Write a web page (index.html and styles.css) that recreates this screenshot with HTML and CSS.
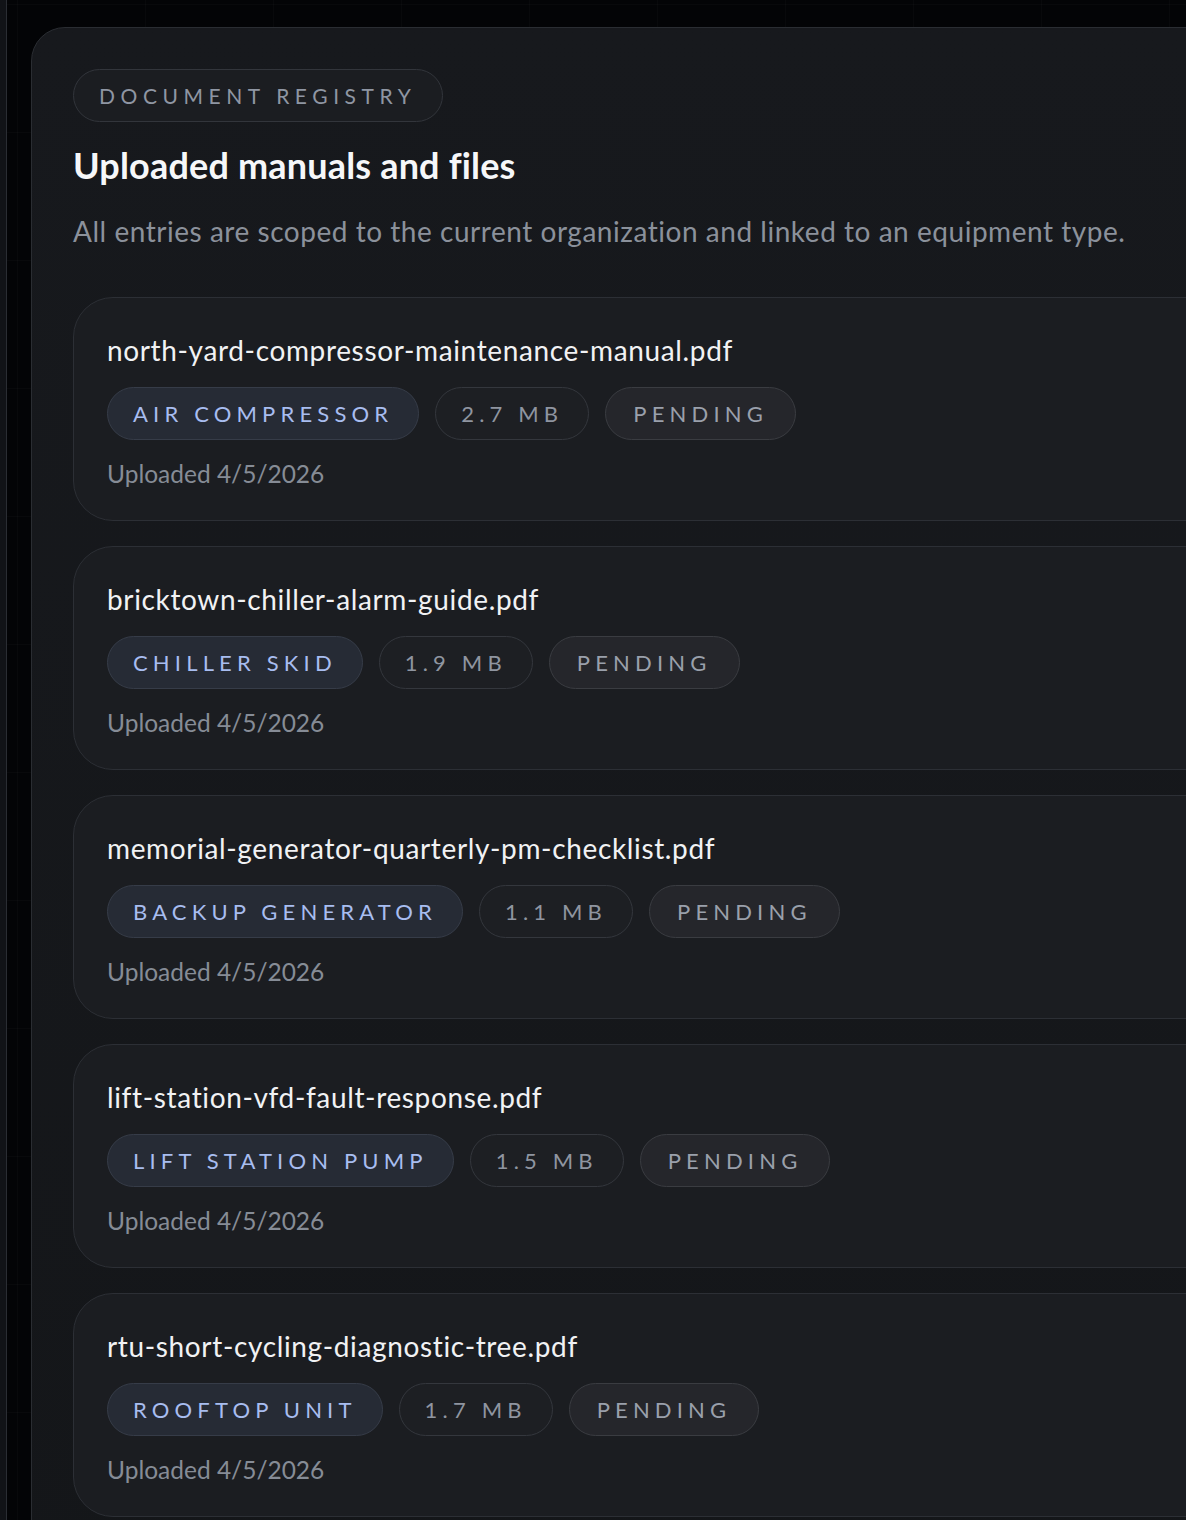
FILE: index.html
```html
<!DOCTYPE html>
<html lang="en">
<head>
<meta charset="utf-8">
<title>Document registry</title>
<link rel="stylesheet" href="styles.css">
</head>
<body>
<div class="app">
  <aside class="rail"></aside>
  <main class="main">
    <section class="panel">
      <span class="eyebrow">Document registry</span>
      <h1 class="title">Uploaded manuals and files</h1>
      <p class="lede">All entries are scoped to the current organization and linked to an equipment type.</p>
      <ul class="docs">
        <li class="doc">
          <div class="doc-name">north-yard-compressor-maintenance-manual.pdf</div>
          <div class="chips">
            <span class="chip chip-type">Air compressor</span>
            <span class="chip chip-size">2.7 MB</span>
            <span class="chip chip-status">Pending</span>
          </div>
          <div class="doc-meta">Uploaded 4/5/2026</div>
        </li>
        <li class="doc">
          <div class="doc-name">bricktown-chiller-alarm-guide.pdf</div>
          <div class="chips">
            <span class="chip chip-type">Chiller skid</span>
            <span class="chip chip-size">1.9 MB</span>
            <span class="chip chip-status">Pending</span>
          </div>
          <div class="doc-meta">Uploaded 4/5/2026</div>
        </li>
        <li class="doc">
          <div class="doc-name">memorial-generator-quarterly-pm-checklist.pdf</div>
          <div class="chips">
            <span class="chip chip-type">Backup generator</span>
            <span class="chip chip-size">1.1 MB</span>
            <span class="chip chip-status">Pending</span>
          </div>
          <div class="doc-meta">Uploaded 4/5/2026</div>
        </li>
        <li class="doc">
          <div class="doc-name">lift-station-vfd-fault-response.pdf</div>
          <div class="chips">
            <span class="chip chip-type">Lift station pump</span>
            <span class="chip chip-size">1.5 MB</span>
            <span class="chip chip-status">Pending</span>
          </div>
          <div class="doc-meta">Uploaded 4/5/2026</div>
        </li>
        <li class="doc">
          <div class="doc-name">rtu-short-cycling-diagnostic-tree.pdf</div>
          <div class="chips">
            <span class="chip chip-type">Rooftop unit</span>
            <span class="chip chip-size">1.7 MB</span>
            <span class="chip chip-status">Pending</span>
          </div>
          <div class="doc-meta">Uploaded 4/5/2026</div>
        </li>
      </ul>
    </section>
  </main>
</div>
</body>
</html>
```

FILE: styles.css
```css
html, body {
  margin: 0;
  padding: 0;
  height: 100%;
  overflow: hidden;
}

body {
  background-color: #030406;
  background-image:
    linear-gradient(to right, rgba(255,255,255,0.02) 1px, transparent 1px),
    linear-gradient(to bottom, rgba(255,255,255,0.02) 1px, transparent 1px);
  background-size: 128px 128px;
  background-position: 17px 4px;
  font-family: Lato, "Noto Sans", "Liberation Sans", sans-serif;
  color: #eef0f3;
}

.app {
  display: flex;
  min-height: 100%;
}

.rail {
  flex: 0 0 6px;
  background: #111317;
  border-right: 1px solid #2a2d33;
}

.main {
  flex: 1;
  padding: 27px 0 0 24px;
  overflow: hidden;
}

.panel {
  width: 1260px;
  box-sizing: border-box;
  min-height: 1600px;
  padding: 41px 40px 40px 41px;
  border: 1px solid #2a2d32;
  border-radius: 34px;
  background: linear-gradient(180deg, #17191d 0%, #141619 100%);
  display: flex;
  flex-direction: column;
  align-items: flex-start;
}

.eyebrow {
  display: inline-flex;
  align-items: center;
  height: 51px;
  padding: 0 26px 0 25px;
  border: 1px solid #32353b;
  border-radius: 999px;
  background: #1b1d21;
  color: #8f96a3;
  font-size: 21px;
  letter-spacing: 0.265em;
  text-transform: uppercase;
}

.title {
  margin: 21px 0 0 0;
  font-size: 36px;
  line-height: 44px;
  font-weight: 700;
  letter-spacing: 0.005em;
  color: #f6f7f9;
}

.lede {
  margin: 26px 0 0 0;
  font-size: 28px;
  line-height: 36px;
  letter-spacing: 0.019em;
  color: #8b919b;
}

.docs {
  list-style: none;
  margin: 48px 0 0 0;
  padding: 0;
  width: 100%;
  display: flex;
  flex-direction: column;
  gap: 25px;
}

.doc {
  height: 224px;
  box-sizing: border-box;
  padding: 33px 33px 0 33px;
  border: 1px solid #2c2f35;
  border-radius: 40px;
  background: #1b1d21;
  display: flex;
  flex-direction: column;
  align-items: flex-start;
}

.doc-name {
  font-size: 28px;
  line-height: 38px;
  letter-spacing: 0.023em;
  color: #f1f2f4;
}

.chips {
  display: flex;
  gap: 16px;
  margin-top: 18px;
}

.chip {
  display: inline-flex;
  align-items: center;
  height: 53px;
  box-sizing: border-box;
  padding: 0 25px;
  border: 1px solid #34373d;
  border-radius: 999px;
  font-size: 22px;
  letter-spacing: 0.235em;
  text-transform: uppercase;
  white-space: nowrap;
}

.chip-type {
  background: #262b35;
  border-color: #363c48;
  color: #a8bdf0;
}

.chip-size {
  background: #1d1f23;
  color: #8f95a0;
}

.chip-status {
  background: #25262b;
  border-color: #3a3c41;
  color: #9aa0ab;
  padding: 0 27px;
}

.doc-meta {
  margin-top: 18px;
  font-size: 24.5px;
  line-height: 32px;
  color: #868c96;
}
```
